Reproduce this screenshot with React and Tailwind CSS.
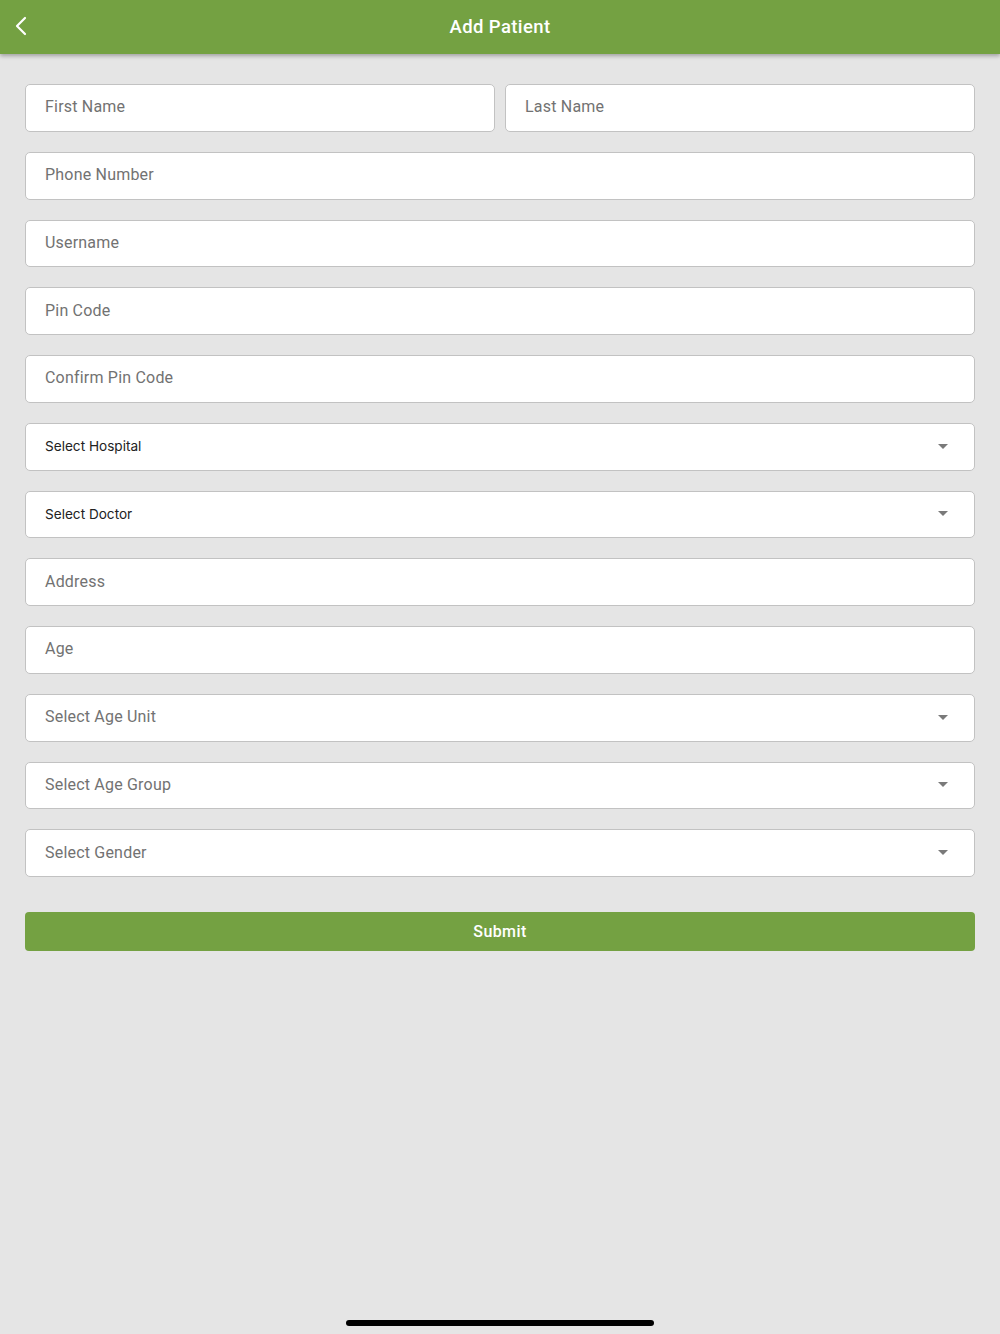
import React from "react";

function Caret() {
  return (
    <svg width="10" height="5" viewBox="0 0 10 5" className="shrink-0">
      <path d="M0 0 L10 0 L5 5 Z" fill="#7a7a7a" />
    </svg>
  );
}

function Field({ label, className = "" }) {
  return (
    <div
      className={`h-[47.75px] bg-white border border-[#c2c2c2] rounded-[5px] flex items-center pl-[19px] pr-[26px] pb-[1px] ${className}`}
    >
      <span className="text-[16px] text-[#727272] tracking-[0.2px]" style={{ fontFamily: "Roboto, 'Liberation Sans', sans-serif" }}>
        {label}
      </span>
    </div>
  );
}

function Select({ label, small }) {
  return (
    <div className="h-[47.75px] bg-white border border-[#c2c2c2] rounded-[5px] flex items-center justify-between pl-[19px] pr-[26px] pb-[1px]">
      {small ? (
        <span className="text-[13.6px] text-[#222]" style={{ fontFamily: "Inter, 'Liberation Sans', sans-serif" }}>
          {label}
        </span>
      ) : (
        <span className="text-[16px] text-[#727272] tracking-[0.2px]" style={{ fontFamily: "Roboto, 'Liberation Sans', sans-serif" }}>
          {label}
        </span>
      )}
      <Caret />
    </div>
  );
}

export default function App() {
  return (
    <div className="w-[1000px] h-[1334px] bg-[#e5e5e5] relative overflow-hidden" style={{ fontFamily: "Roboto, 'Liberation Sans', sans-serif" }}>
      <div className="h-[54px] bg-[#74a142] flex items-center justify-center relative shadow-[0_2px_4px_rgba(0,0,0,0.3)] z-10 pt-[2px]">
        <svg width="14" height="20" viewBox="0 0 14 20" className="absolute left-[14px] top-[16px]">
          <path d="M11 2 L3 10 L11 18" fill="none" stroke="white" strokeWidth="2.2" strokeLinecap="round" strokeLinejoin="round" />
        </svg>
        <span className="text-white text-[18.5px] font-medium tracking-[0.4px]">Add Patient</span>
      </div>
      <div className="px-[25px] pt-[30px] flex flex-col gap-[20px]">
        <div className="flex gap-[10px]">
          <Field label="First Name" className="flex-1" />
          <Field label="Last Name" className="flex-1" />
        </div>
        <Field label="Phone Number" />
        <Field label="Username" />
        <Field label="Pin Code" />
        <Field label="Confirm Pin Code" />
        <Select label="Select Hospital" small />
        <Select label="Select Doctor" small />
        <Field label="Address" />
        <Field label="Age" />
        <Select label="Select Age Unit" />
        <Select label="Select Age Group" />
        <Select label="Select Gender" />
        <div className="mt-[15px] h-[39px] bg-[#74a142] rounded-[4px] flex items-center justify-center">
          <span className="text-white text-[16px] font-medium tracking-[0.4px]">Submit</span>
        </div>
      </div>
      <div className="absolute left-[346px] top-[1320px] w-[308px] h-[6px] rounded-full bg-black" />
    </div>
  );
}
